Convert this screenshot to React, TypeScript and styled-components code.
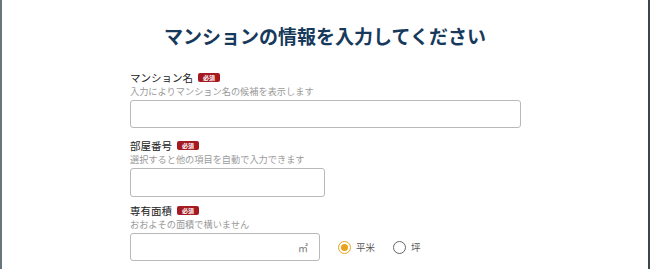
import styled, { createGlobalStyle } from 'styled-components';

const GlobalStyle = createGlobalStyle`
  body {
    margin: 0;
    background: #fff;
    font-family: "Noto Sans CJK JP", "Noto Sans", sans-serif;
  }
`;

const Frame = styled.div`
  box-sizing: border-box;
  width: 650px;
  height: 269px;
  overflow: hidden;
  border-left: 2px solid #66767c;
  border-right: 2px solid #3c474c;
  background: #fff;
`;

const Title = styled.h1`
  margin: 0;
  padding-top: 21px;
  text-align: center;
  font-size: 19px;
  line-height: 30px;
  font-weight: 700;
  color: #173a5c;
`;

const Form = styled.div`
  margin: 19px 0 0 128px;
  display: flex;
  flex-direction: column;
`;

const Field = styled.div<{ $gap?: number }>`
  display: flex;
  flex-direction: column;
  margin-top: ${(p) => p.$gap ?? 0}px;
`;

const LabelRow = styled.div`
  display: flex;
  align-items: center;
  gap: 5px;
  height: 14px;
`;

const Label = styled.span`
  font-size: 10.5px;
  color: #222;
`;

const Required = styled.span`
  display: inline-flex;
  align-items: center;
  justify-content: center;
  width: 22px;
  height: 9px;
  border-radius: 2px;
  background: #a51a20;
  color: #fff;
  font-size: 6px;
  font-weight: 700;
`;

const Hint = styled.div`
  font-size: 9.2px;
  line-height: 14px;
  color: #9a9a9a;
  margin-bottom: 2px;
`;

const InputRow = styled.div`
  display: flex;
  align-items: center;
  gap: 18px;
`;

const InputBox = styled.div<{ $width: number; $height?: number }>`
  box-sizing: border-box;
  width: ${(p) => p.$width}px;
  height: ${(p) => p.$height ?? 28}px;
  border: 1px solid #b9b9b9;
  border-radius: 3px;
  display: flex;
  align-items: center;
  justify-content: flex-end;
  padding-right: 11px;
`;

const Unit = styled.span`
  font-size: 10px;
  color: #777;
`;

const Radios = styled.div`
  display: flex;
  align-items: center;
  gap: 18px;
`;

const Radio = styled.label`
  display: flex;
  align-items: center;
  gap: 5px;
  font-size: 9.5px;
  color: #555;
`;

const Circle = styled.span<{ $on?: boolean }>`
  box-sizing: border-box;
  width: 13px;
  height: 13px;
  border-radius: 50%;
  border: 1.5px solid ${(p) => (p.$on ? '#e9a21a' : '#666')};
  display: flex;
  align-items: center;
  justify-content: center;
  &::after {
    content: '';
    display: ${(p) => (p.$on ? 'block' : 'none')};
    width: 7px;
    height: 7px;
    border-radius: 50%;
    background: #e9a21a;
  }
`;

export default function App() {
  return (
    <>
      <GlobalStyle />
      <Frame>
        <Title>マンションの情報を入力してください</Title>
        <Form>
          <Field>
            <LabelRow>
              <Label>マンション名</Label>
              <Required>必須</Required>
            </LabelRow>
            <Hint>入力によりマンション名の候補を表示します</Hint>
            <InputBox $width={391} />
          </Field>
          <Field $gap={10}>
            <LabelRow>
              <Label>部屋番号</Label>
              <Required>必須</Required>
            </LabelRow>
            <Hint>選択すると他の項目を自動で入力できます</Hint>
            <InputBox $width={195} $height={29} />
          </Field>
          <Field $gap={6}>
            <LabelRow>
              <Label>専有面積</Label>
              <Required>必須</Required>
            </LabelRow>
            <Hint>おおよその面積で構いません</Hint>
            <InputRow>
              <InputBox $width={190}>
                <Unit>㎡</Unit>
              </InputBox>
              <Radios>
                <Radio>
                  <Circle $on />
                  平米
                </Radio>
                <Radio>
                  <Circle />
                  坪
                </Radio>
              </Radios>
            </InputRow>
          </Field>
        </Form>
      </Frame>
    </>
  );
}
